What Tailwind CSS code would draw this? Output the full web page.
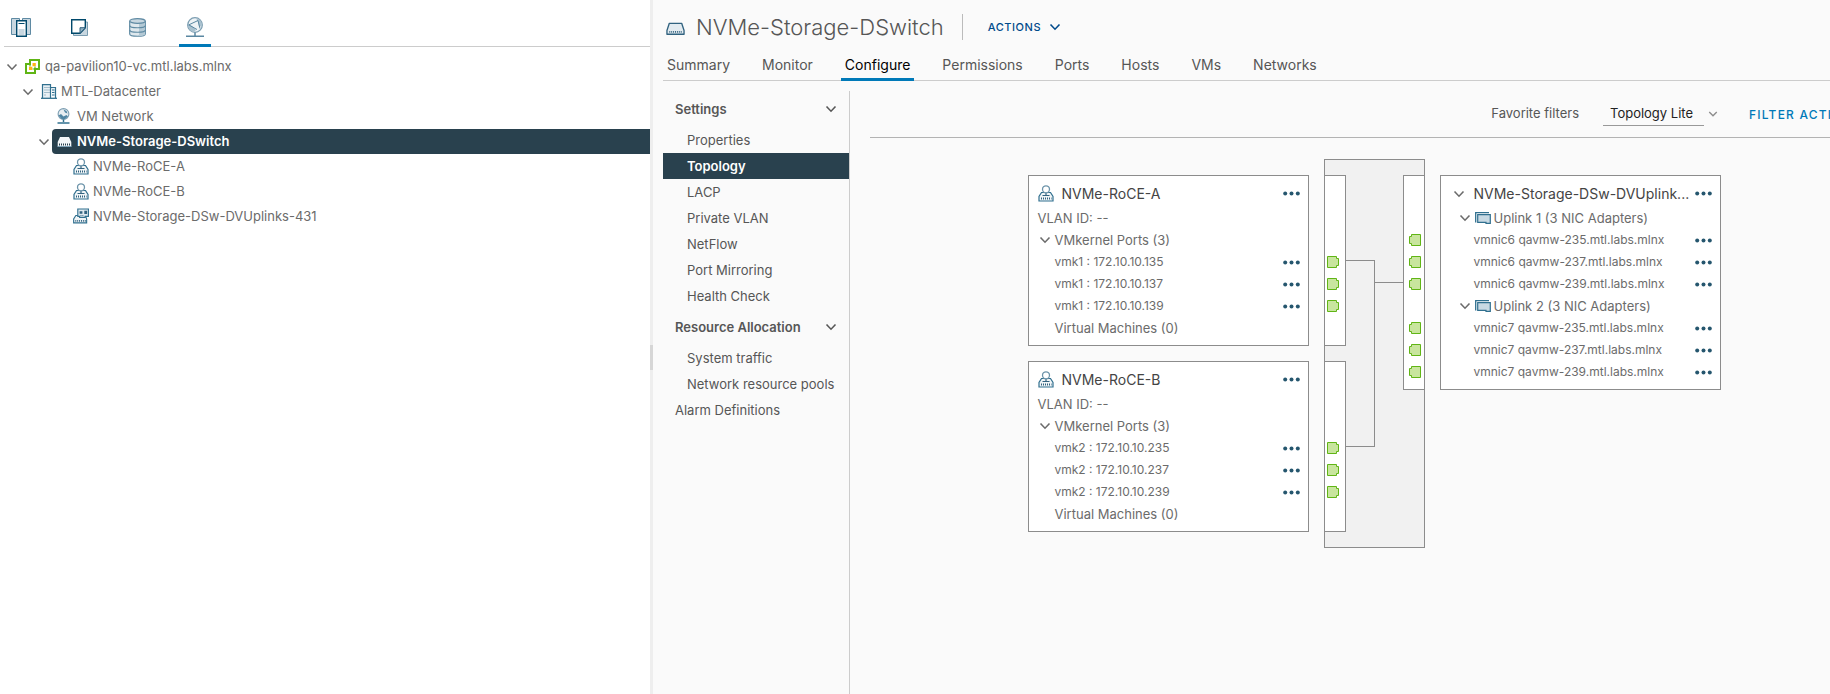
<!DOCTYPE html>
<html lang="en">
<head>
  <meta charset="UTF-8">
  <meta name="viewport" content="width=device-width, initial-scale=1.0">
  <title>NVMe-Storage-DSwitch - Topology</title>
  <script src="https://cdn.jsdelivr.net/npm/@tailwindcss/browser@4"></script>
</head>
<body class="flex h-screen overflow-hidden bg-[#fafafa] font-['Inter',sans-serif] text-[13px] text-[#6b6b6b]">

  <!-- Icon sprite -->
  <svg class="hidden">
    <symbol id="chevron" viewBox="0 0 12 12"><path d="M1.5 3.5 6 8.2l4.5-4.7" fill="none" stroke="currentColor" stroke-width="1.6" /></symbol>
    <symbol id="dots" viewBox="0 0 17 5"><g fill="#25566e"><circle cx="2.2" cy="2.5" r="2" /><circle cx="8.5" cy="2.5" r="2" /><circle cx="14.8" cy="2.5" r="2" /></g></symbol>
    <symbol id="switch" viewBox="0 0 20 14">
      <path d="M3.5 1h13l2.5 7.5V12.5H1V8.5z" fill="#e3ebf0" stroke="#31627f" stroke-width="1.4" stroke-linejoin="round" />
      <path d="M3.5 10h13" stroke="#31627f" stroke-width="2" stroke-dasharray="1 1" />
    </symbol>
    <symbol id="switch-light" viewBox="0 0 15 11">
      <path d="M3 1h9l2.3 5v4.3H.7V6z" fill="#f4f7f9" />
      <path d="M2 8.5h11.5" stroke="#29414e" stroke-width="2" stroke-dasharray="1 1" />
      <path d="M.5 10.5h14" stroke="#7fa3b8" />
    </symbol>
    <symbol id="portgroup" viewBox="0 0 16 17">
      <path d="M3.5 7.5h9l2.500 4v4.500H1v-4.500z" fill="#f1f5f7" stroke="#31708f" stroke-width="1.200" />
      <path d="M3 13.500h10.500" stroke="#31627f" stroke-width="2" stroke-dasharray="1 1" />
      <path d="M4.500 10.500h7M8 8v2" stroke="#31627f" stroke-width="1.200" />
      <circle cx="8" cy="4.300" r="3.500" fill="#fff" stroke="#6d94aa" stroke-width="1.300" />
    </symbol>
    <symbol id="uplinks" viewBox="0 0 17 16">
      <path d="M3 7.500h10l1.500 3.500v4.300H.700V11z" fill="#f1f5f7" stroke="#31708f" stroke-width="1.200" />
      <path d="M2.500 13.200h11" stroke="#31627f" stroke-width="1.800" stroke-dasharray="1 1" />
      <path d="M5.100.600h11.300v7.800H13v1H7V8.400H5.100z" fill="#dfe9ef" stroke="#31708f" stroke-width="1.200" />
      <path d="M7 3h3v2.500H7zM12 2.500h3V6h-3z" fill="#31627f" />
      <path d="M8 7.500h4" stroke="#31627f" stroke-dasharray="1 1" />
    </symbol>
    <symbol id="nic" viewBox="0 0 16 12">
      <path d="M.7 10.500V.7H14" fill="none" stroke="#31708f" stroke-width="1.300" />
      <path d="M2.700 2.700h12.600v8.700H11v-1H2.700z" fill="#c8d9e3" stroke="#31708f" stroke-width="1.200" />
    </symbol>
    <symbol id="globe" viewBox="0 0 18 21">
      <circle cx="9" cy="8" r="7.300" fill="#eef3f6" stroke="#7b9db1" stroke-width="1.300" />
      <path d="M10 1a7 7 0 0 1 6 8l-3 1-1-5zM2 7l4 2 4 4-2 2c-3 0-6-3-6-8z" fill="#a9c1cf" />
      <path d="M2.500 8 12 3.500l2 8M3 8l8 4.500" fill="none" stroke="#5a87a1" />
      <path d="M9 15.500V19M0 19.300h18" stroke="#5a87a1" stroke-width="1.500" />
    </symbol>
    <symbol id="globe-small" viewBox="0 0 13 16">
      <circle cx="6.500" cy="6" r="5.400" fill="#e6edf1" stroke="#7b9db1" stroke-width="1.100" />
      <path d="M1.500 7.500 4 6l2.500 2.500L9.500 7l1.500 1.500L8 11H4.500zM6.500 1.500l3 1.500 1 2.500-2.500-1z" fill="#4f85a3" />
      <path d="M6.500 11.500V14" stroke="#31708f" stroke-width="1.500" /><path d="M.500 15h12" stroke="#31708f" stroke-width="1.500" />
    </symbol>
    <symbol id="port" viewBox="0 0 12 12">
      <path d="M.5.500h9v2h2v7h-2v2h-9z" fill="#c8e59e" stroke="#60b515" />
    </symbol>
  </svg>

  <!-- Inventory -->
  <aside class="flex w-[650px] shrink-0 flex-col bg-white">
    <nav class="ml-1 flex h-[47px] shrink-0 items-stretch gap-[26px] border-b border-[#ccc] pl-px">
      <button class="flex w-8 justify-center pt-[18px]" aria-label="Hosts and clusters">
        <svg class="h-[19px] w-5" viewBox="0 0 20 19">
          <path d="M.500.500h8v16h-8zM11.500.500h8v16h-8z" fill="#c8d7e0" stroke="#5f8aa3" />
          <path d="M5.700 2.700h9.600v15.600H5.700z" fill="#fff" stroke="#00486b" stroke-width="1.400" />
          <path d="M7.500 5.500h6" stroke="#00486b" /><path d="M7.500 11h6v6h-6z" fill="#c8d7e0" />
        </svg>
      </button>
      <button class="flex w-8 justify-center pt-[19px]" aria-label="VMs and templates">
        <svg class="h-[17px] w-[17px]" viewBox="0 0 17 17">
          <path d="M2.500 3h14v13.500h-14z" fill="#c8d7e0" stroke="#7b9db1" />
          <path d="M.700.700h13.600v8L9 14.300H.700z" fill="#fff" stroke="#00486b" stroke-width="1.400" />
          <path d="M14.300 8.700 9 14.300V8.700z" fill="#8fb0c2" stroke="#31627f" />
        </svg>
      </button>
      <button class="flex w-8 justify-center pt-[18px]" aria-label="Storage">
        <svg class="h-[19px] w-[17px]" viewBox="0 0 17 19">
          <path d="M.700 3v13c0 3 15.600 3 15.600 0V3" fill="#dfe8ed" stroke="#5f8aa3" stroke-width="1.200" />
          <path d="M10 5v13c3 0 6-.500 6-2V3z" fill="#b4c9d5" />
          <ellipse cx="8.500" cy="3" rx="7.800" ry="2.300" fill="#c8d7e0" stroke="#5f8aa3" stroke-width="1.200" />
          <path d="M.700 7.500c0 3 15.600 3 15.600 0M.700 12c0 3 15.600 3 15.600 0" fill="none" stroke="#5f8aa3" stroke-width="1.200" />
        </svg>
      </button>
      <button class="-mb-px flex w-8 justify-center border-b-[3px] border-[#0079b8] pt-[17px]" aria-label="Networking">
        <svg class="h-[21px] w-[18px]"><use href="#globe" /></svg>
      </button>
    </nav>

    <ul class="pt-[7px] leading-6">
      <li class="flex h-[25px] items-start pl-1.5">
        <button class="mt-[7px] flex" aria-label="Collapse"><svg class="size-3"><use href="#chevron" /></svg></button>
        <svg class="mt-[5px] ml-[7px] size-[15px]" viewBox="0 0 15 15">
          <path d="M5 1h9v9h-4v4H1V5h4z" fill="#fff" stroke="#60b515" stroke-width="2" />
          <path d="M5 5v2.500M7.500 10H10V7.500" fill="none" stroke="#60b515" stroke-width="1.200" />
          <path d="M7.500 4h3.300v3.300H7.500zM4 7.700h3.300V11H4z" fill="#fdb515" />
        </svg>
        <span class="ml-[5px]">qa-pavilion10-vc.mtl.labs.mlnx</span>
      </li>
      <li class="flex h-[25px] items-start pl-[22px]">
        <button class="mt-[7px] flex" aria-label="Collapse"><svg class="size-3"><use href="#chevron" /></svg></button>
        <svg class="mt-[5px] ml-[7px] h-[15px] w-4" viewBox="0 0 16 15">
          <path d="M1.500 14V.600h8V14M9.500 3.500h5V14" fill="#e9f0f4" stroke="#31708f" stroke-width="1.200" />
          <path d="M0 14.300h16" stroke="#31708f" stroke-width="1.300" />
          <path d="M3.500 3.500h5M3.500 6h5M3.500 8.500h5M3.500 11h2" stroke="#5f8aa3" stroke-width="1.200" stroke-dasharray="1 1" />
          <path d="M11 6h2.500M11 8.500h2.500M11 11h2.500" stroke="#31708f" />
        </svg>
        <span class="ml-1">MTL-Datacenter</span>
      </li>
      <li class="flex h-[25px] items-start pl-[57px]">
        <svg class="mt-1 h-4 w-[13px]"><use href="#globe-small" /></svg>
        <span class="ml-[7px]">VM Network</span>
      </li>
      <li class="flex h-[25px] items-start pl-[38px]">
        <button class="mt-[7px] flex" aria-label="Collapse"><svg class="size-3"><use href="#chevron" /></svg></button>
        <div class="ml-0.5 flex h-full grow items-start rounded-l-sm bg-[#29414e] pl-[5px] font-semibold text-white">
          <svg class="mt-[7px] h-[11px] w-[15px]"><use href="#switch-light" /></svg>
          <span class="ml-[5px]">NVMe-Storage-DSwitch</span>
        </div>
      </li>
      <li class="flex h-[25px] items-start pl-[73px]">
        <svg class="mt-1 h-[17px] w-4"><use href="#portgroup" /></svg>
        <span class="ml-1">NVMe-RoCE-A</span>
      </li>
      <li class="flex h-[25px] items-start pl-[73px]">
        <svg class="mt-1 h-[17px] w-4"><use href="#portgroup" /></svg>
        <span class="ml-1">NVMe-RoCE-B</span>
      </li>
      <li class="flex h-[25px] items-start pl-[73px]">
        <svg class="mt-1 h-4 w-4"><use href="#uplinks" /></svg>
        <span class="ml-1">NVMe-Storage-DSw-DVUplinks-431</span>
      </li>
    </ul>
  </aside>

  <!-- Splitter -->
  <div class="flex w-[3px] shrink-0 flex-col justify-center bg-[#eee] pt-5">
    <div class="h-[25px] bg-[#d6d6d6]"></div>
  </div>

  <main class="flex min-w-0 grow flex-col pl-2.5">
    <header class="flex h-[54px] shrink-0 items-center pl-[3px]">
      <svg class="mt-1 h-[14px] w-[19px]"><use href="#switch" /></svg>
      <h1 class="ml-[11px] text-[22px] font-light text-[#565656]">NVMe-Storage-DSwitch</h1>
      <div class="ml-[18px] h-[26px] w-px bg-[#bbb]"></div>
      <button class="ml-[25px] flex items-center gap-2 text-[11px] font-medium tracking-wider text-[#004a8b]">
        ACTIONS <svg class="size-3"><use href="#chevron" /></svg>
      </button>
    </header>

    <nav class="flex h-[27px] shrink-0 gap-6 border-b border-[#ccc] text-[14px] leading-[22px] text-[#565656]">
      <a href="#" class="px-1">Summary</a>
      <a href="#" class="px-1">Monitor</a>
      <a href="#" class="-mb-px border-b-[3px] border-[#0079b8] px-1 text-black">Configure</a>
      <a href="#" class="px-1">Permissions</a>
      <a href="#" class="px-1">Ports</a>
      <a href="#" class="px-1">Hosts</a>
      <a href="#" class="px-1">VMs</a>
      <a href="#" class="px-1">Networks</a>
    </nav>

    <div class="flex min-h-0 grow">
      <!-- Settings menu -->
      <nav class="mt-2.5 w-[187px] shrink-0 border-r border-[#ccc] leading-[26px] text-[#565656]">
        <button class="flex h-9 w-full items-center justify-between pr-3 pl-3 font-semibold">Settings <svg class="size-3"><use href="#chevron" /></svg></button>
        <a href="#" class="block pl-6">Properties</a>
        <a href="#" class="block bg-[#29414e] pl-6 font-semibold text-white">Topology</a>
        <a href="#" class="block pl-6">LACP</a>
        <a href="#" class="block pl-6">Private VLAN</a>
        <a href="#" class="block pl-6">NetFlow</a>
        <a href="#" class="block pl-6">Port Mirroring</a>
        <a href="#" class="block pl-6">Health Check</a>
        <button class="flex h-9 w-full items-center justify-between pr-3 pl-3 font-semibold">Resource Allocation <svg class="size-3"><use href="#chevron" /></svg></button>
        <a href="#" class="block pl-6">System traffic</a>
        <a href="#" class="block pl-6 whitespace-nowrap">Network resource pools</a>
        <a href="#" class="block pl-3">Alarm Definitions</a>
      </nav>

      <!-- Topology, runs past the right edge of the window -->
      <section class="min-w-0 grow overflow-hidden pl-5">
        <div class="w-[calc(100%+48px)]">
          <div class="flex h-[57px] items-center justify-end border-b border-[#b3b3b3] pt-2.5 whitespace-nowrap">
            <label for="filter" class="text-[#565656]">Favorite filters</label>
            <div class="ml-6 flex items-center">
              <select id="filter" class="h-6 w-[101px] appearance-none border-b border-[#999] pl-[7px] text-[#222]">
                <option>Topology Lite</option>
              </select>
              <svg class="ml-1 size-2.5 text-[#8c8c8c]"><use href="#chevron" /></svg>
            </div>
            <button class="ml-[31px] w-[129px] pt-0.5 text-left text-[12px] font-medium tracking-widest text-[#0079b8]">FILTER ACTIONS</button>
          </div>

          <div class="flex items-start justify-center gap-[15px] pt-[37px]">
            <!-- Port groups -->
            <div class="flex w-[281px] flex-col gap-[15px] leading-[22px]">
              <div class="border border-[#8c8c8c] bg-white pr-2 pb-1.5 pl-[9px]">
                <div class="flex h-[31px] items-center pt-1">
                  <svg class="h-[17px] w-4"><use href="#portgroup" /></svg>
                  <h2 class="ml-2 grow text-[14px] text-[#444]">NVMe-RoCE-A</h2>
                  <button aria-label="Actions"><svg class="h-[5px] w-[17px]"><use href="#dots" /></svg></button>
                </div>
                <p>VLAN ID: --</p>
                <button class="flex h-[22px] items-center gap-1 pl-px"><svg class="size-3"><use href="#chevron" /></svg>VMkernel Ports (3)</button>
                <ul class="pl-[17px] text-[12px]">
                  <li class="flex h-[22px] items-center justify-between">vmk1 : 172.10.10.135 <button aria-label="Actions"><svg class="h-[5px] w-[17px]"><use href="#dots" /></svg></button></li>
                  <li class="flex h-[22px] items-center justify-between">vmk1 : 172.10.10.137 <button aria-label="Actions"><svg class="h-[5px] w-[17px]"><use href="#dots" /></svg></button></li>
                  <li class="flex h-[22px] items-center justify-between">vmk1 : 172.10.10.139 <button aria-label="Actions"><svg class="h-[5px] w-[17px]"><use href="#dots" /></svg></button></li>
                </ul>
                <p class="pl-[17px]">Virtual Machines (0)</p>
              </div>

              <div class="border border-[#8c8c8c] bg-white pr-2 pb-1.5 pl-[9px]">
                <div class="flex h-[31px] items-center pt-1">
                  <svg class="h-[17px] w-4"><use href="#portgroup" /></svg>
                  <h2 class="ml-2 grow text-[14px] text-[#444]">NVMe-RoCE-B</h2>
                  <button aria-label="Actions"><svg class="h-[5px] w-[17px]"><use href="#dots" /></svg></button>
                </div>
                <p>VLAN ID: --</p>
                <button class="flex h-[22px] items-center gap-1 pl-px"><svg class="size-3"><use href="#chevron" /></svg>VMkernel Ports (3)</button>
                <ul class="pl-[17px] text-[12px]">
                  <li class="flex h-[22px] items-center justify-between">vmk2 : 172.10.10.235 <button aria-label="Actions"><svg class="h-[5px] w-[17px]"><use href="#dots" /></svg></button></li>
                  <li class="flex h-[22px] items-center justify-between">vmk2 : 172.10.10.237 <button aria-label="Actions"><svg class="h-[5px] w-[17px]"><use href="#dots" /></svg></button></li>
                  <li class="flex h-[22px] items-center justify-between">vmk2 : 172.10.10.239 <button aria-label="Actions"><svg class="h-[5px] w-[17px]"><use href="#dots" /></svg></button></li>
                </ul>
                <p class="pl-[17px]">Virtual Machines (0)</p>
              </div>
            </div>

            <!-- Switch body -->
            <div class="-mt-4 flex w-[101px] items-start border border-[#8c8c8c] bg-[#f1f1f1] py-[15px]">
              <div class="flex w-[21px] flex-col gap-[15px]">
                <div class="flex h-[171px] flex-col gap-2.5 border-y border-r border-[#8c8c8c] bg-white pt-20 pl-0.5">
                  <svg class="size-3"><use href="#port" /></svg>
                  <svg class="size-3"><use href="#port" /></svg>
                  <svg class="size-3"><use href="#port" /></svg>
                </div>
                <div class="flex h-[171px] flex-col gap-2.5 border-y border-r border-[#8c8c8c] bg-white pt-20 pl-0.5">
                  <svg class="size-3"><use href="#port" /></svg>
                  <svg class="size-3"><use href="#port" /></svg>
                  <svg class="size-3"><use href="#port" /></svg>
                </div>
              </div>
              <svg class="h-[357px] w-[57px]" viewBox="0 0 57 357" fill="none" stroke="#8c8c8c" shape-rendering="crispEdges">
                <path d="M0 85.500h28.500v186H0M28.500 107.500H57" />
              </svg>
              <div class="flex h-[215px] w-[21px] flex-col items-end gap-2.5 border-y border-l border-[#8c8c8c] bg-white pt-[58px] pr-[3px]">
                <svg class="size-3 -scale-x-100"><use href="#port" /></svg>
                <svg class="size-3 -scale-x-100"><use href="#port" /></svg>
                <svg class="size-3 -scale-x-100"><use href="#port" /></svg>
                <svg class="mt-[22px] size-3 -scale-x-100"><use href="#port" /></svg>
                <svg class="size-3 -scale-x-100"><use href="#port" /></svg>
                <svg class="size-3 -scale-x-100"><use href="#port" /></svg>
              </div>
            </div>

            <!-- Uplinks -->
            <div class="w-[281px] border border-[#8c8c8c] bg-white pr-2 pb-1.5 pl-3 leading-[22px]">
              <div class="flex h-[31px] items-center pt-1">
                <button aria-label="Collapse"><svg class="size-3"><use href="#chevron" /></svg></button>
                <h2 class="ml-[9px] grow text-[14px] whitespace-nowrap text-[#444]">NVMe-Storage-DSw-DVUplink...</h2>
                <button aria-label="Actions"><svg class="h-[5px] w-[17px]"><use href="#dots" /></svg></button>
              </div>
              <button class="flex h-[22px] items-center pl-1.5"><svg class="size-3"><use href="#chevron" /></svg><svg class="mr-[3px] ml-1 h-3 w-4"><use href="#nic" /></svg>Uplink 1 (3 NIC Adapters)</button>
              <ul class="pl-[21px] text-[12px]">
                <li class="flex h-[22px] items-center justify-between">vmnic6 qavmw-235.mtl.labs.mlnx <button aria-label="Actions"><svg class="h-[5px] w-[17px]"><use href="#dots" /></svg></button></li>
                <li class="flex h-[22px] items-center justify-between">vmnic6 qavmw-237.mtl.labs.mlnx <button aria-label="Actions"><svg class="h-[5px] w-[17px]"><use href="#dots" /></svg></button></li>
                <li class="flex h-[22px] items-center justify-between">vmnic6 qavmw-239.mtl.labs.mlnx <button aria-label="Actions"><svg class="h-[5px] w-[17px]"><use href="#dots" /></svg></button></li>
              </ul>
              <button class="flex h-[22px] items-center pl-1.5"><svg class="size-3"><use href="#chevron" /></svg><svg class="mr-[3px] ml-1 h-3 w-4"><use href="#nic" /></svg>Uplink 2 (3 NIC Adapters)</button>
              <ul class="pl-[21px] text-[12px]">
                <li class="flex h-[22px] items-center justify-between">vmnic7 qavmw-235.mtl.labs.mlnx <button aria-label="Actions"><svg class="h-[5px] w-[17px]"><use href="#dots" /></svg></button></li>
                <li class="flex h-[22px] items-center justify-between">vmnic7 qavmw-237.mtl.labs.mlnx <button aria-label="Actions"><svg class="h-[5px] w-[17px]"><use href="#dots" /></svg></button></li>
                <li class="flex h-[22px] items-center justify-between">vmnic7 qavmw-239.mtl.labs.mlnx <button aria-label="Actions"><svg class="h-[5px] w-[17px]"><use href="#dots" /></svg></button></li>
              </ul>
            </div>
          </div>
        </div>
      </section>
    </div>
  </main>
</body>
</html>
